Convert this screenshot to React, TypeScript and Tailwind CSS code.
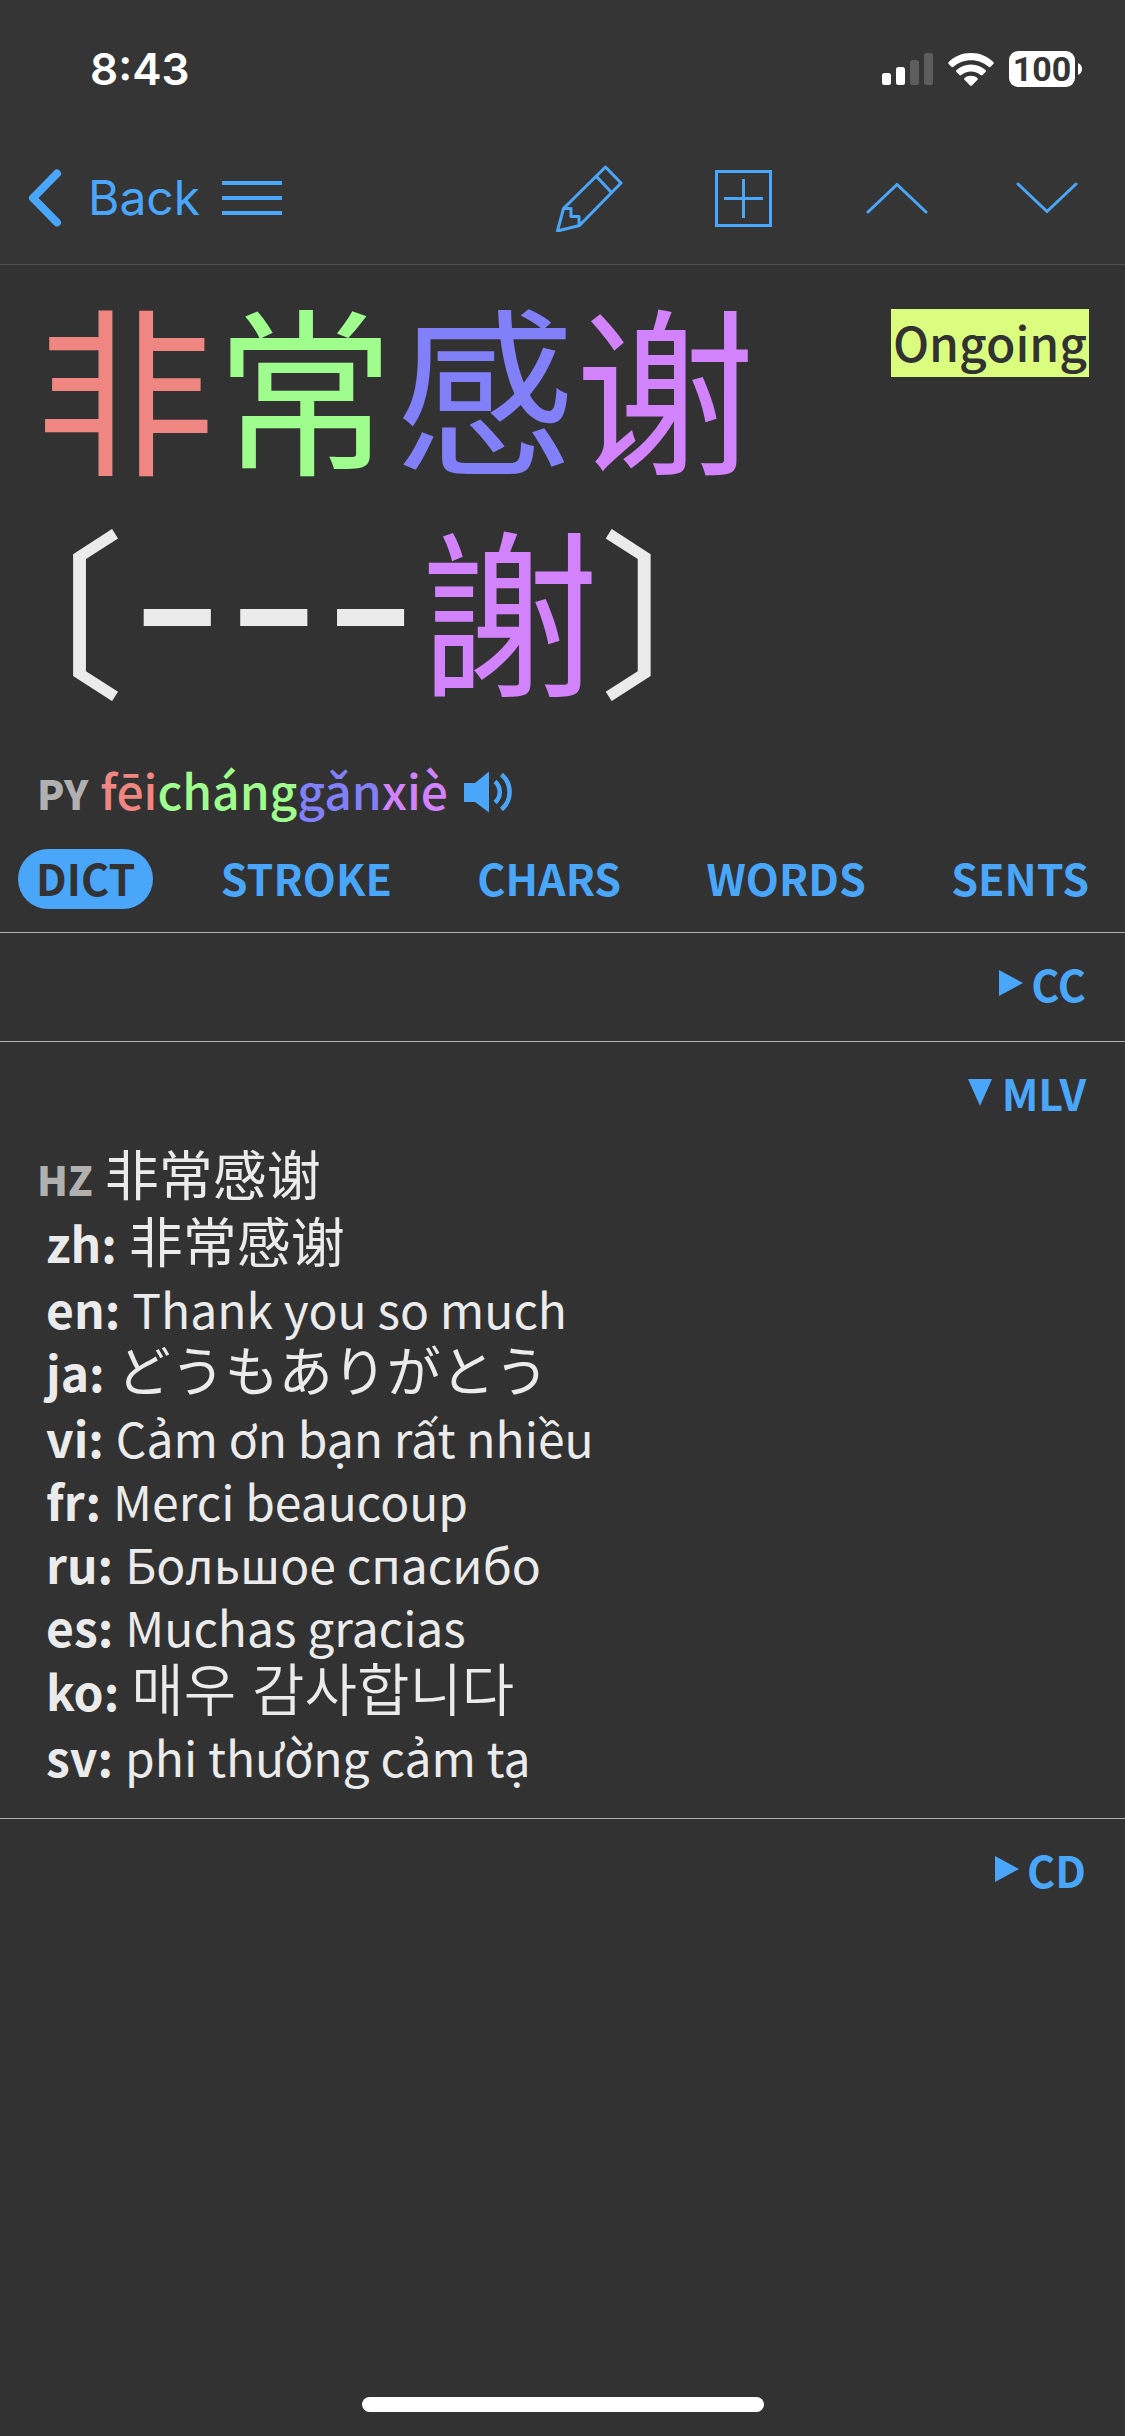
import type { ReactNode } from "react";

const tabs = ["DICT", "STROKE", "CHARS", "WORDS", "SENTS"];

type Translation = {
  code: string;
  text: string;
  lang: string;
  size?: string;
  spaced?: boolean;
};

const translations: Translation[] = [
  { code: "zh", text: "非常感谢", lang: "zh-CN", size: "text-[54px] leading-none" },
  { code: "en", text: "Thank you so much", lang: "en", spaced: true },
  { code: "ja", text: "どうもありがとう", lang: "ja", size: "text-[54px] leading-none" },
  { code: "vi", text: "Cảm ơn bạn rất nhiều", lang: "vi", spaced: true },
  { code: "fr", text: "Merci beaucoup", lang: "fr" },
  { code: "ru", text: "Большое спасибо", lang: "ru" },
  { code: "es", text: "Muchas gracias", lang: "es" },
  { code: "ko", text: "매우 감사합니다", lang: "ko", size: "text-[57px] leading-none font-[350]" },
  { code: "sv", text: "phi thường cảm tạ", lang: "vi", spaced: true },
];

function StatusBar() {
  return (
    <div className="flex items-center justify-between h-[138px] pl-[90px] pr-[43px] text-white font-['Inter',sans-serif]">
      <span className="text-[44px] leading-none font-semibold">8:43</span>
      <div className="flex items-center">
        <svg width="51" height="32" viewBox="0 0 51 32" fill="currentColor">
          <rect x="0" y="20" width="9" height="12" rx="2.5" />
          <rect x="14" y="14" width="9" height="18" rx="2.5" />
          <rect x="28" y="7" width="9" height="25" rx="2.5" opacity="0.2" />
          <rect x="42" y="0" width="9" height="32" rx="2.5" opacity="0.2" />
        </svg>
        <svg className="ml-[15px]" width="46" height="33" viewBox="0 0 46 33" fill="currentColor">
          <path d="M23 0C14 0 6.300 3.400.7 9c-.6.6-.6 1.500 0 2.100l2.700 2.700c.6.600 1.400.6 2 0C10 9.700 16.200 7.200 23 7.200s13 2.500 17.600 6.600c.6.6 1.400.6 2 0l2.700-2.700c.6-.6.6-1.500 0-2.100C39.700 3.400 32 0 23 0Z" />
          <path d="M23 11.500c-5.600 0-10.700 2.100-14.500 5.600-.6.6-.6 1.400 0 2l3 2.900c.6.6 1.300.6 1.900.1 2.600-2.200 5.900-3.500 9.600-3.500s7 1.300 9.600 3.500c.6.5 1.300.5 1.900-.1l3-2.900c.6-.6.6-1.400 0-2-3.800-3.500-8.900-5.600-14.500-5.600Z" />
          <path d="M23 22.700c-2.400 0-4.700.8-6.400 2.200-.6.5-.6 1.300-.1 1.900l5.600 5.700c.5.500 1.300.5 1.800 0l5.600-5.700c.5-.6.5-1.400-.1-1.900-1.700-1.400-4-2.200-6.400-2.200Z" />
        </svg>
        <span className="ml-[15px] flex items-center justify-center w-[66px] h-9 rounded-[9px] bg-white text-[#353535] text-[34px] leading-none font-bold font-['Roboto',sans-serif]">
          100
        </span>
        <svg className="ml-[3px]" width="4" height="12" viewBox="0 0 4 12" fill="currentColor">
          <path d="M0 0C2.500 1 4 3.300 4 6s-1.500 5-4 6Z" />
        </svg>
      </div>
    </div>
  );
}

function NavBar() {
  return (
    <nav className="flex items-center justify-between h-[126px] pb-1.5 pl-7 pr-[47px] text-[#4aa6f9]">
      <div className="flex items-center">
        <button type="button" className="flex items-center gap-[26px] text-[48px] leading-[60px] font-['Inter',sans-serif]">
          <svg width="34" height="58" viewBox="0 0 34 58" fill="none" stroke="currentColor" strokeWidth="8" strokeLinecap="round" strokeLinejoin="round">
            <path d="M29 4.500 5 29l24 24.500" />
          </svg>
          Back
        </button>
        <button type="button" aria-label="Menu" className="ml-[22px]">
          <svg width="60" height="34" viewBox="0 0 60 34" fill="currentColor">
            <path d="M0 0h60v4H0zM0 15h60v4H0zM0 30h60v4H0z" />
          </svg>
        </button>
      </div>
      <div className="flex items-center">
        <button type="button" aria-label="Edit">
          <svg width="68" height="68" viewBox="0 0 68 68" fill="none" stroke="currentColor" strokeWidth="3" strokeLinejoin="round">
            <path d="M50.500 3 66 19 24.500 61.500 2.500 67 8.500 44.500ZM41.500 12.500 56.500 28.500M8.500 44.500h7.500v8h8v9" />
          </svg>
        </button>
        <button type="button" aria-label="Add" className="ml-[92px]">
          <svg width="57" height="57" viewBox="0 0 57 57" fill="none" stroke="currentColor" strokeWidth="3">
            <path d="M1.500 1.500h54v54h-54zM9 28.500h39M28.500 9v39" />
          </svg>
        </button>
        <button type="button" aria-label="Previous" className="ml-[94px]">
          <svg width="62" height="32" viewBox="0 0 62 32" fill="none" stroke="currentColor" strokeWidth="3" strokeLinecap="round">
            <path d="M2 30 31 2.500 60 30" />
          </svg>
        </button>
        <button type="button" aria-label="Next" className="ml-[88px]">
          <svg width="62" height="32" viewBox="0 0 62 32" fill="none" stroke="currentColor" strokeWidth="3" strokeLinecap="round">
            <path d="M2 2 31 29.500 60 2" />
          </svg>
        </button>
      </div>
    </nav>
  );
}

function Headword() {
  return (
    <div className="flex items-start justify-between pl-[35px] pr-9 pt-[7px]">
      <h1 className="text-[180px] leading-[222px] text-[#ebebeb]" lang="zh-CN">
        <span className="text-[#ef8682]">非</span>
        <span className="text-[#9ffd8e]">常</span>
        <span className="text-[#8280f8]">感</span>
        <span className="text-[#d282fa]">谢</span>
        <br />
        <span className="[font-feature-settings:'halt']">〔</span>
        <span className="pl-1 text-[210px] leading-0 font-['Inter',sans-serif]">---</span>
        <span className="text-[#d282fa]">謝</span>
        <span className="[font-feature-settings:'halt']">〕</span>
      </h1>
      <span className="mt-[37px] px-0.5 h-[68px] bg-[#dafd7f] text-[#323232] text-[48px] leading-[64px] font-medium">
        Ongoing
      </span>
    </div>
  );
}

function Pinyin() {
  return (
    <div className="flex items-baseline gap-3 mt-[42px] pl-[37px] leading-[63px]">
      <span className="text-[40px] font-black text-[#b0b0b0]">PY</span>
      <span className="text-[48px] font-medium">
        <span className="text-[#ef8682]">fēi</span>
        <span className="text-[#9ffd8e]">cháng</span>
        <span className="text-[#8280f8]">gǎn</span>
        <span className="text-[#d282fa]">xiè</span>
      </span>
      <button type="button" aria-label="Play" className="self-center ml-1 text-[#4aa6f9]">
        <svg width="50" height="42" viewBox="0 0 50 42" fill="currentColor">
          <path d="M0 12h11L25 .5v41L11 31H0z" />
          <path d="M31 10.500a14 14 0 0 1 0 21" fill="none" stroke="currentColor" strokeWidth="4.500" />
          <path d="M37.500 3.500a23 23 0 0 1 0 35" fill="none" stroke="currentColor" strokeWidth="4.500" />
        </svg>
      </button>
    </div>
  );
}

function Tabs() {
  return (
    <div className="flex items-center justify-between mt-6 px-[18px] text-[43px] font-bold text-[#4aa6f9]">
      {tabs.map((tab, i) => (
        <button
          key={tab}
          type="button"
          className={`h-[60px] pb-1 px-[18px] leading-[56px] rounded-full ${i === 0 ? "bg-[#4aa6f9] text-[#323232]" : ""}`}
        >
          {tab}
        </button>
      ))}
    </div>
  );
}

function Section({ name, open, children }: { name: string; open?: boolean; children?: ReactNode }) {
  return (
    <section className="border-t border-[#b0b0b0]">
      <button
        type="button"
        aria-expanded={!!open}
        className={`flex items-center justify-end w-full pr-[39px] text-[43px] leading-[100px] font-bold text-[#4aa6f9] ${open ? "" : "mb-2"}`}
      >
        {open ? (
          <svg className="mr-2.5" width="24" height="27" viewBox="0 0 24 27" fill="currentColor">
            <path d="M0 0h24L12 27z" />
          </svg>
        ) : (
          <svg className="mr-2" width="24" height="26" viewBox="0 0 24 26" fill="currentColor">
            <path d="M0 0v26l24-13z" />
          </svg>
        )}
        {name}
      </button>
      {children}
    </section>
  );
}

export default function App() {
  return (
    <div className="flex flex-col min-h-screen bg-[#323232] font-['Noto_Sans_CJK_SC',sans-serif]">
      <header className="bg-[#353535] border-b border-[#4f4f4f]">
        <StatusBar />
        <NavBar />
      </header>
      <main className="flex-1">
        <Headword />
        <Pinyin />
        <Tabs />
        <div className="mt-[23px]">
          <Section name="CC" />
          <Section name="MLV" open>
            <div className="pt-1 pb-[30px] pl-[37px] text-[48px] leading-[63px] text-[#ebebeb]">
              <p className="flex items-baseline gap-3">
                <span className="text-[40px] font-black text-[#b0b0b0]">HZ</span>
                <span className="text-[54px] leading-none" lang="zh-CN">非常感谢</span>
              </p>
              {translations.map((item) => (
                <p key={item.code} className={`flex items-baseline gap-3 pl-[9px] ${item.spaced ? "pt-[3px]" : ""}`}>
                  <b className="font-bold">{item.code}:</b>
                  <span lang={item.lang} className={item.size}>
                    {item.text}
                  </span>
                </p>
              ))}
            </div>
          </Section>
          <Section name="CD" />
        </div>
      </main>
      <div className="self-center mb-6 w-[402px] h-[15px] rounded-full bg-white" />
    </div>
  );
}
